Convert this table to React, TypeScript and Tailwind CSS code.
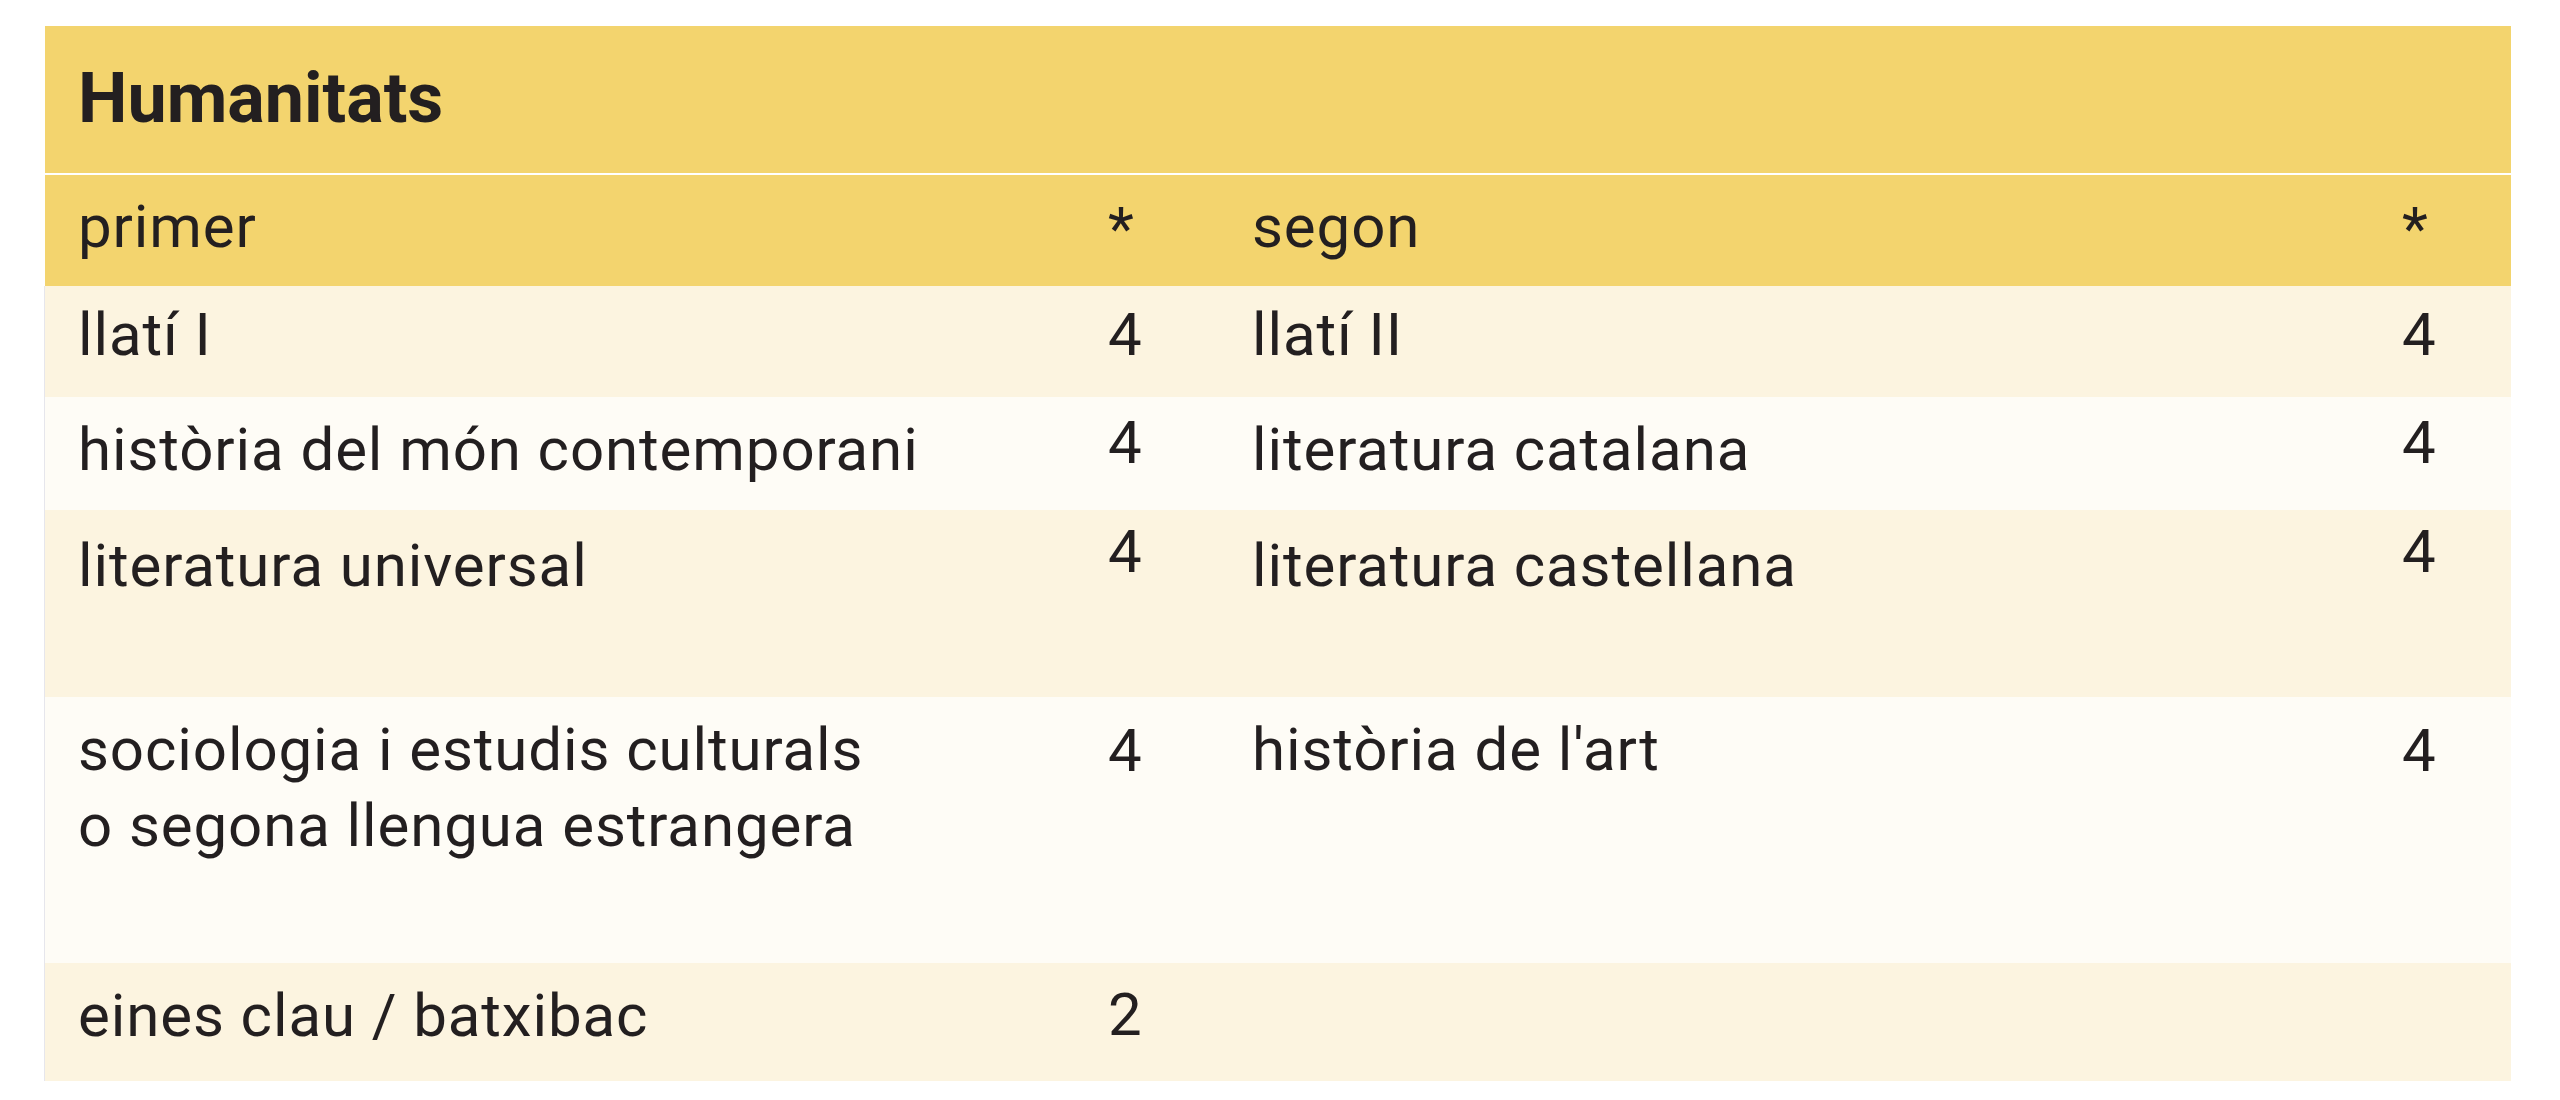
type Row = {
  left: string[];
  leftCredits: string;
  right: string[];
  rightCredits: string;
  rowClass: string;
  textPad: string;
  numPad: string;
};

const rows: Row[] = [
  {
    left: ["llatí I"],
    leftCredits: "4",
    right: ["llatí II"],
    rightCredits: "4",
    rowClass: "h-[111px] bg-[#fcf4e0]",
    textPad: "pt-[11px]",
    numPad: "pt-[11px]",
  },
  {
    left: ["història del món contemporani"],
    leftCredits: "4",
    right: ["literatura catalana"],
    rightCredits: "4",
    rowClass: "h-[113px] bg-[#fefcf6]",
    textPad: "pt-[15px]",
    numPad: "pt-[8px]",
  },
  {
    left: ["literatura universal"],
    leftCredits: "4",
    right: ["literatura castellana"],
    rightCredits: "4",
    rowClass: "h-[187px] bg-[#fcf4e0]",
    textPad: "pt-[18px]",
    numPad: "pt-[4px]",
  },
  {
    left: ["sociologia i estudis culturals", "o segona llengua estrangera"],
    leftCredits: "4",
    right: ["història de l'art"],
    rightCredits: "4",
    rowClass: "h-[266px] bg-[#fefcf6]",
    textPad: "pt-[15px]",
    numPad: "pt-[16px]",
  },
  {
    left: ["eines clau / batxibac"],
    leftCredits: "2",
    right: [],
    rightCredits: "",
    rowClass: "h-[118px] bg-[#fcf4e0]",
    textPad: "pt-[15px]",
    numPad: "pt-[14px]",
  },
];

function Cell({ lines, pad }: { lines: string[]; pad: string }) {
  return (
    <div className={`pl-[33px] ${pad}`}>
      {lines.map((line) => (
        <div key={line}>{line}</div>
      ))}
    </div>
  );
}

export default function App() {
  return (
    <div className="min-h-screen bg-white pl-[44px] pt-[26px] font-['Roboto',sans-serif] text-[#231f20]">
      <div className="w-[2467px]">
        <div className="ml-px h-[147px] bg-[#f3d46e] pl-[33px] pt-[30px] text-[70px] font-bold leading-[84px]">
          Humanitats
        </div>
        <div className="ml-px mt-[2px] grid h-[111px] grid-cols-[1030px_144px_1150px_142px] bg-[#f3d46e] text-[60px] leading-[76px] tracking-[0.9px]">
          <Cell lines={["primer"]} pad="pt-[14px]" />
          <Cell lines={["*"]} pad="pt-[16px]" />
          <Cell lines={["segon"]} pad="pt-[14px]" />
          <Cell lines={["*"]} pad="pt-[16px]" />
        </div>
        {rows.map((row, i) => (
          <div
            key={i}
            className={`grid grid-cols-[1030px_144px_1150px_142px] border-l border-[#e6e6ec] text-[60px] leading-[76px] tracking-[0.9px] ${row.rowClass}`}
          >
            <Cell lines={row.left} pad={row.textPad} />
            <Cell lines={[row.leftCredits]} pad={row.numPad} />
            <Cell lines={row.right} pad={row.textPad} />
            <Cell lines={[row.rightCredits]} pad={row.numPad} />
          </div>
        ))}
      </div>
    </div>
  );
}
